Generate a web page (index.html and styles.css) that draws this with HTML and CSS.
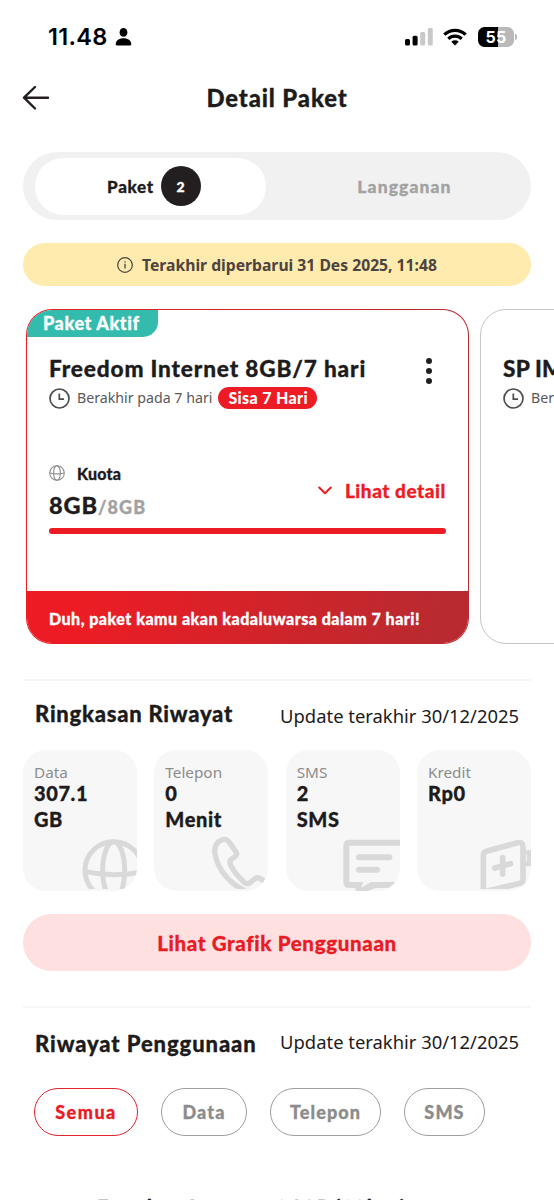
FILE: index.html
```
<!DOCTYPE html>
<html lang="id">
<head>
<meta charset="utf-8">
<title>Detail Paket</title>
<link rel="stylesheet" href="styles.css">
</head>
<body>
<div class="screen">
  <div class="status">
    <span class="time">11.48</span>
    <svg class="person" width="17" height="18" viewBox="0 0 17 18"><ellipse cx="8.5" cy="4.4" rx="3.9" ry="4.4"/><path d="M.7 16.2C.7 12.400 4 10.200 8.500 10.200s7.800 2.200 7.800 6c0 .8-.5 1.200-1.400 1.200H2.100C1.200 17.400.7 17 .7 16.200Z"/></svg>
    <div class="status-right">
      <svg width="28" height="18" viewBox="0 0 28 18"><rect x="0" y="11" width="5" height="6.500" rx="1.500"/><rect x="7.600" y="7.800" width="5" height="9.700" rx="1.500"/><g fill="#c9c9c9"><rect x="15.200" y="4" width="5" height="13.500" rx="1.500"/><rect x="22.800" y="0" width="5" height="17.500" rx="1.500"/></g></svg>
      <svg class="wifi" width="24" height="18" viewBox="0 0 24 18"><g fill="none" stroke="#000" stroke-width="3.200"><path d="M1.300 6.600a15.400 15.400 0 0 1 21.400 0"/><path d="M5.300 10.800a9.700 9.700 0 0 1 13.400 0"/></g><path d="M12 17.600l3.700-3.900a5.400 5.400 0 0 0-7.400 0Z"/></svg>
      <div class="battery">55</div><i class="battery-tip"></i>
    </div>
  </div>

  <header class="header">
    <svg class="back" width="28" height="26" viewBox="0 0 28 26"><path d="M13 2 2 12.700 13 23.500M2 12.700h24" fill="none" stroke="#231f20" stroke-width="2.400" stroke-linecap="round" stroke-linejoin="round"/></svg>
    <h1>Detail Paket</h1>
  </header>

  <nav class="tabs">
    <div class="tab tab-on"><span>Paket</span><b>2</b></div>
    <div class="tab">Langganan</div>
  </nav>

  <div class="notice">
    <svg width="16" height="16" viewBox="0 0 16 16" fill="none" stroke="#4d4340"><circle cx="8" cy="8" r="7.300" stroke-width="1.200"/><path d="M8 6.800v4.700M8 4.200v1.300" stroke-width="1.300"/></svg>
    <span>Terakhir diperbarui 31 Des 2025, 11:48</span>
  </div>

  <div class="carousel">
    <article class="plan plan-active">
      <div class="ribbon">Paket Aktif</div>
      <div class="plan-head">
        <h2>Freedom Internet 8GB/7 hari</h2>
        <svg width="6" height="26" viewBox="0 0 6 26" fill="#231f20"><circle cx="3" cy="3" r="3"/><circle cx="3" cy="13" r="3"/><circle cx="3" cy="23" r="3"/></svg>
      </div>
      <div class="expiry">
        <svg width="21" height="21" viewBox="0 0 21 21" fill="none" stroke="#4d4d4f" stroke-width="1.700"><circle cx="10.500" cy="10.500" r="9.500"/><path d="M10.300 5.500v5.700H15"/></svg>
        <span>Berakhir pada 7 hari</span><b>Sisa 7 Hari</b>
      </div>
      <div class="quota">
        <div>
          <div class="quota-name"><svg width="16" height="16" viewBox="0 0 16 16" fill="none" stroke="#8c8c8c" stroke-width="1.100"><circle cx="8" cy="8" r="7.300"/><ellipse cx="8" cy="8" rx="3.400" ry="7.300"/><path d="M.7 8q7.300 1.800 14.600 0"/></svg>Kuota</div>
          <div class="quota-value">8GB<span>/8GB</span></div>
        </div>
        <a class="more"><svg width="14" height="9" viewBox="0 0 14 9"><path d="M1.200 1.500 7 7.300l5.800-5.800" fill="none" stroke="#ed1c24" stroke-width="2" stroke-linecap="round" stroke-linejoin="round"/></svg>Lihat detail</a>
      </div>
      <div class="meter"></div>
      <div class="warning">Duh, paket kamu akan kadaluwarsa dalam 7 hari!</div>
    </article>
    <article class="plan plan-next">
      <div class="plan-head"><h2>SP IM3</h2></div>
      <div class="expiry">
        <svg width="21" height="21" viewBox="0 0 21 21" fill="none" stroke="#4d4d4f" stroke-width="1.700"><circle cx="10.500" cy="10.500" r="9.500"/><path d="M10.300 5.500v5.700H15"/></svg>
        <span>Berakhir</span>
      </div>
    </article>
  </div>

  <section class="summary">
    <div class="section-head"><h3>Ringkasan Riwayat</h3><time>Update terakhir 30/12/2025</time></div>
    <div class="stats">
      <div class="stat"><span>Data</span><b>307.1<br>GB</b>
        <svg width="57" height="53" viewBox="240 438 171 159" fill="none" stroke="#d9d9d9" stroke-width="15"><circle cx="341" cy="541" r="86"/><ellipse cx="341" cy="541" rx="33" ry="86"/><path d="M255 545q86 18 172 0"/></svg></div>
      <div class="stat"><span>Telepon</span><b>0<br>Menit</b>
        <svg width="57" height="53" viewBox="633 438 171 159" fill="none" stroke="#d9d9d9" stroke-width="16" stroke-linejoin="round"><path d="M735 602C690 582 653 540 645 491c-3-20 3-34 20-41 12-5 18-1 24 8l19 28q5 8-3 14l-11 8q-7 6-3 15c8 20 24 38 43 55q8 6 15 1l16-13q8-6 16 0l26 15"/></svg></div>
      <div class="stat"><span>SMS</span><b>2<br>SMS</b>
        <svg class="flush" width="57" height="52" viewBox="197 448 171 156" fill="none" stroke="#d9d9d9" stroke-width="18" stroke-linecap="round"><path d="M380 459H216q-9 0-9 9V577q0 9 9 9H235M290 586H380M245 503h91M245 540h54"/><path d="M230 577H258L252 594 280 577H300V593L266 606H236Z" fill="#d9d9d9" stroke="none"/></svg></div>
      <div class="stat"><span>Kredit</span><b>Rp0</b>
        <svg width="51" height="51" viewBox="608 447 153 153" fill="none" stroke="#d9d9d9" stroke-width="17" stroke-linecap="round"><path d="M618 612V500q0-10 10-13l93-26q16-3 16 12v98q0 10-9 12l-98 23M652 537l48-13M676 506v49"/><path d="M737 490h35M737 525h35M755 490v35" stroke-width="13"/></svg></div>
    </div>
    <button class="chart-button">Lihat Grafik Penggunaan</button>
  </section>

  <section class="history">
    <div class="section-head"><h3>Riwayat Penggunaan</h3><time>Update terakhir 30/12/2025</time></div>
    <div class="chips">
      <span class="chip chip-on">Semua</span><span class="chip chip-data">Data</span><span class="chip chip-phone">Telepon</span><span class="chip chip-sms">SMS</span>
    </div>
    <div class="entry">Freedom Internet 24GB/30hari</div>
  </section>
</div>
</body>
</html>
```
FILE: styles.css
```
* { box-sizing: border-box; }
body { margin: 0; background: #fff; color: #1d1b1c; font-family: Lato, "Open Sans", sans-serif; font-weight: 900; font-variant-ligatures: none; -webkit-text-stroke: .3px; }
h1, h2, h3 { margin: 0; font-weight: 900; white-space: nowrap; }
svg { display: block; flex: none; }
.screen { width: 554px; height: 1200px; overflow: hidden; }

.status { display: flex; align-items: center; height: 74px; padding: 0 38px 0 48px; color: #000; -webkit-text-stroke: 0; }
.time { font: 600 23.500px/28px Inter, sans-serif; letter-spacing: .3px; width: 67px; }
.status-right { display: flex; align-items: center; margin-left: auto; }
.wifi { margin-left: 10px; }
.battery { width: 36px; height: 20px; margin-left: 11px; border-radius: 6.500px; background: linear-gradient(90deg, #000 55%, #b9b9b9 55%); color: #fff; font: 700 16px/20px Inter, sans-serif; text-align: center; letter-spacing: .2px; }
.battery-tip { width: 2px; height: 6px; margin: 0 -1px 0 1px; border-radius: 0 2px 2px 0; background: #b9b9b9; }

.header { display: grid; grid-template-columns: 28px 1fr 28px; align-items: center; height: 48px; padding: 0 22px; }
.header h1 { text-align: center; font-size: 23.800px; letter-spacing: .900px; }

.tabs { display: flex; height: 68px; margin: 30px 23px 0; padding: 5.500px 11.500px; border-radius: 34px; background: #f1f1f1; }
.tab { display: flex; align-items: center; justify-content: center; flex: 1; padding-left: 24px; color: #a2a2a2; font-size: 17.500px; letter-spacing: 1.100px; }
.tab-on { flex: 0 0 231px; gap: 7px; padding: 0 0 0 8px; border-radius: 29px; background: #fff; color: #1d1b1c; font-size: 17px; letter-spacing: .7px; }
.tab-on b { display: grid; place-items: center; width: 40px; height: 40px; border-radius: 50%; background: #231f20; color: #fff; font-size: 14px; font-weight: 900; }

.notice { display: flex; align-items: center; justify-content: center; gap: 9px; height: 43px; margin: 23px 23px 0; border-radius: 22px; background: #feebad; color: #4d4340; font: 700 15.700px/20px "Noto Sans", sans-serif; -webkit-text-stroke: 0; }

.carousel { display: flex; gap: 11px; height: 335px; margin: 23px 0 0 26px; }
.plan { position: relative; flex: none; display: flex; flex-direction: column; width: 443px; border: 1.500px solid transparent; border-radius: 26px; padding: 46px 22px 0; overflow: hidden; }
.plan-active { background: linear-gradient(#fff, #fff) padding-box, linear-gradient(90deg, #ed1c24, #b92a30) border-box; }
.plan-next { border: 1px solid #c6c6c6; }
.plan-next h2 { letter-spacing: .200px; }
.ribbon { position: absolute; left: 0; top: 0; height: 27px; width: 131px; padding-left: 16px; border-radius: 0 0 15px; background: #33bbad; color: #fff; font-size: 18px; line-height: 27px; letter-spacing: .600px; }
.plan-head { display: flex; justify-content: space-between; height: 27px; padding-right: 14px; }
.plan-head h2 { font-size: 22.600px; line-height: 25px; letter-spacing: .850px; }
.plan-next .plan-head h2 { letter-spacing: .200px; }
.plan-head svg { margin-top: 2px; }
.expiry { display: flex; align-items: center; height: 30px; color: #58585a; font: 14.200px/20px "Noto Sans", sans-serif; white-space: nowrap; -webkit-text-stroke: 0; }
.expiry span { margin-left: 7px; }
.expiry b { height: 22px; margin-left: 6px; padding: 0 9px 0 10px; border-radius: 11px; background: #ed1c24; color: #fff; font: 900 16px/22px Lato, sans-serif; letter-spacing: .350px; }
.quota { display: flex; justify-content: space-between; margin-top: 48px; }
.quota-name { display: flex; align-items: center; gap: 12px; height: 24px; font-size: 16px; letter-spacing: .200px; }
.quota-value { height: 41px; font-size: 23.500px; line-height: 40px; letter-spacing: .900px; }
.quota-value span { font-size: 18px; color: #a2a2a2; letter-spacing: 1.100px; }
.more { display: flex; align-items: center; gap: 13px; height: 59px; color: #ed1c24; font-size: 19px; letter-spacing: .550px; }
.meter { height: 6px; margin-top: 2px; border-radius: 3px; background: #ed1c24; }
.warning { height: 54px; margin: auto -24px -2px; padding-left: 24px; background: linear-gradient(100deg, #ed1c24 12%, #b92a30 92%); color: #fff; font-size: 16px; line-height: 56px; letter-spacing: .490px; white-space: nowrap; }

.summary, .history { margin: 35px 23px 0; border-top: 2px solid #f6f6f6; }
.section-head { display: flex; align-items: center; justify-content: space-between; height: 69px; padding: 0 12px; }
.section-head h3 { padding-bottom: 4px; font-size: 22px; letter-spacing: .750px; }
.section-head time { font: 18.400px/24px "Noto Sans", sans-serif; -webkit-text-stroke: 0; }
.stats { display: flex; justify-content: space-between; }
.stat { position: relative; width: 114px; height: 141px; padding: 12px 11px; border-radius: 23px; background: #f7f7f7; overflow: hidden; }
.stat span { display: block; color: #8c8c8c; font: 15.300px/20px "Noto Sans", sans-serif; -webkit-text-stroke: 0; }
.stat b { display: block; font-size: 20px; line-height: 25.500px; font-weight: 900; letter-spacing: .600px; margin-top: -1px; }
.stat svg { position: absolute; right: 0; bottom: 2px; }
.stat .flush { bottom: 0; }
.chart-button { display: block; width: 100%; height: 57px; margin-top: 23px; border: 0; border-radius: 29px; background: #fee0e1; color: #e91c26; font: 900 20.500px/57px Lato, sans-serif; letter-spacing: .650px; -webkit-text-stroke: .3px; }
.history .section-head { height: 70px; }
.history .section-head h3 { letter-spacing: .900px; padding: 0; }
.history .section-head time { padding-bottom: 3px; }
.chips { display: flex; gap: 23px; margin: 10px 0 0 11px; }
.chip { height: 48px; border: 1.300px solid #9e9e9e; border-radius: 24px; color: #8c8c8c; font-size: 18px; line-height: 46px; text-align: center; letter-spacing: 1.100px; }
.chip-on { width: 104px; border-color: #e3242b; color: #e91c26; letter-spacing: 1.500px; }
.chip-data { width: 86px; }
.chip-phone { width: 111px; }
.chip-sms { width: 81px; }
.entry { margin: 59px 0 0 74px; font-size: 20px; line-height: 24px; letter-spacing: 1.050px; }
```
